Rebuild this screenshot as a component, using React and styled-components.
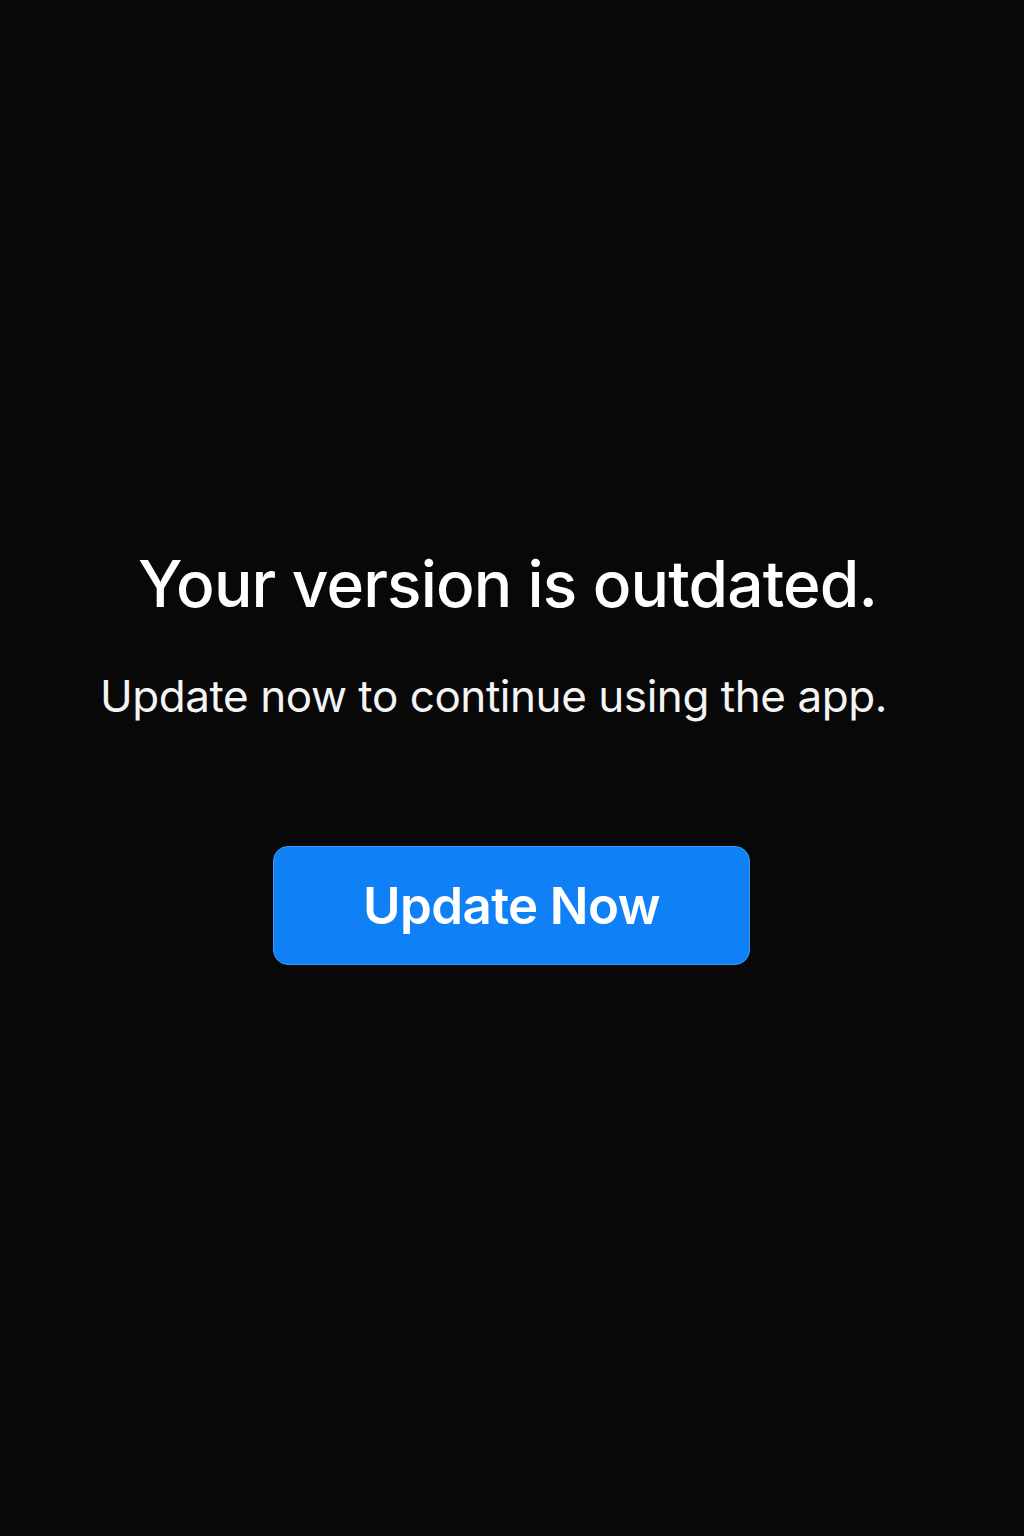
import styled, { createGlobalStyle } from "styled-components";

const GlobalStyle = createGlobalStyle`
  html, body {
    margin: 0;
    padding: 0;
    background: #080808;
  }
  * {
    box-sizing: border-box;
  }
`;

const Screen = styled.main`
  min-height: 1536px;
  padding-top: 546px;
  display: flex;
  flex-direction: column;
  align-items: center;
  background: #080808;
  font-family: Inter, "Noto Sans", sans-serif;
  color: #ffffff;
`;

const Title = styled.h1`
  margin: 0 9px 0 0;
  font-size: 64px;
  line-height: 76px;
  font-weight: 500;
  letter-spacing: -0.85px;
`;

const Subtitle = styled.p`
  margin: 48px 37px 0 0;
  font-size: 44px;
  line-height: 52px;
  font-weight: 400;
  letter-spacing: -0.45px;
  color: #f4f4f4;
`;

const UpdateButton = styled.button`
  margin-top: 124px;
  margin-right: 1px;
  width: 477px;
  height: 119px;
  border: 1px solid #3d97f7;
  border-radius: 15px;
  background: #0f80f5;
  color: #ffffff;
  font-family: Inter, "Noto Sans", sans-serif;
  font-size: 51px;
  font-weight: 600;
  letter-spacing: -0.6px;
  cursor: pointer;
`;

const App = () => {
  return (
    <>
      <GlobalStyle />
      <Screen>
        <Title>Your version is outdated.</Title>
        <Subtitle>Update now to continue using the app.</Subtitle>
        <UpdateButton>Update Now</UpdateButton>
      </Screen>
    </>
  );
};

export default App;
